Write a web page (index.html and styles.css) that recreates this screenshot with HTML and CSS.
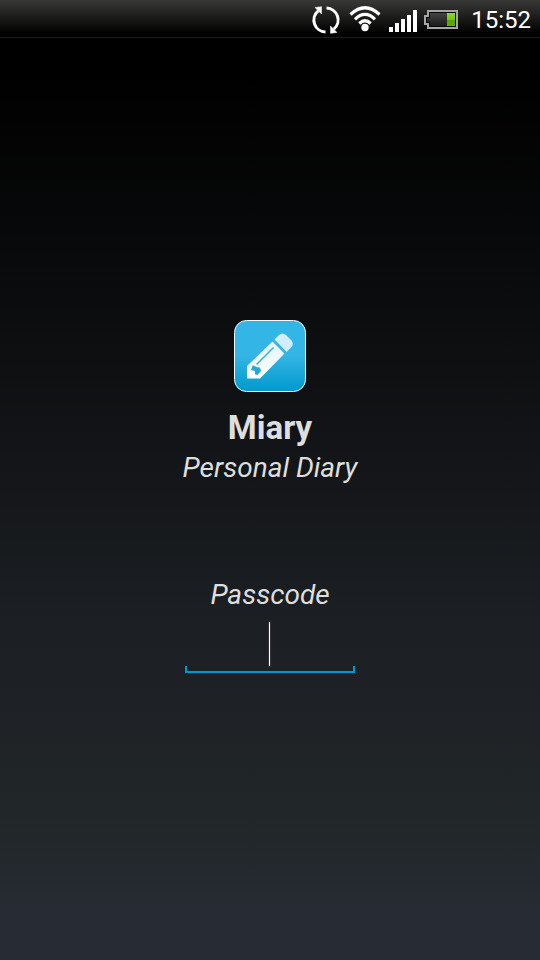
FILE: index.html
```html
<!DOCTYPE html>
<html lang="en">
<head>
<meta charset="utf-8">
<meta name="viewport" content="width=device-width, initial-scale=1">
<title>Miary</title>
<link rel="stylesheet" href="styles.css">
</head>
<body>
<header class="status">
  <svg class="sync" width="30" height="30" viewBox="0 0 30 30" aria-hidden="true">
    <g fill="none" stroke="#fff" stroke-width="3">
      <path d="M15.500 3A12 12 0 0 1 22.800 24.200"/>
      <path d="M14.500 27A12 12 0 0 1 7.200 5.800"/>
    </g>
    <path d="M19.500 21V28.300L26 27.500ZM10.500 9V1.700L4 2.500Z" fill="#fff" stroke="#fff" stroke-width=".5"/>
  </svg>
  <svg class="wifi" width="32" height="28" viewBox="0 0 32 28" aria-hidden="true">
    <g fill="none" stroke="#fff" stroke-width="3.200">
      <path d="M1.500 8.500Q16-5 30.500 8.500"/>
      <path d="M6 13.300Q16 3.500 26 13.300"/>
      <path d="M10.300 17.500Q16 12 21.700 17.500"/>
    </g>
    <circle cx="16" cy="21.500" r="3.700" fill="#fff"/>
  </svg>
  <svg class="signal" width="28" height="22" viewBox="0 0 28 22" aria-hidden="true">
    <path fill="#fff" d="M0 17h4v5H0zM6 13h4v9H6zM12 9h4v13h-4zM18 5h4v17h-4zM24 0h4v22h-4z"/>
  </svg>
  <svg class="battery" width="34" height="19" viewBox="0 0 34 19" aria-hidden="true">
    <defs>
      <linearGradient id="cell" x2="0" y2="1"><stop offset="0" stop-color="#444"/><stop offset="1" stop-color="#1b1b1b"/></linearGradient>
      <linearGradient id="charge" x2="0" y2="1"><stop offset="0" stop-color="#8fd82b"/><stop offset=".5" stop-color="#79c411"/><stop offset=".55" stop-color="#5ba500"/><stop offset="1" stop-color="#60a80a"/></linearGradient>
    </defs>
    <path d="M4 1H33V18H4V14H1V6H4Z" fill="#080808" stroke="#a6a6a6" stroke-width="2"/>
    <path d="M6 3H23V16H6V12H3V8H6Z" fill="url(#cell)"/>
    <path d="M23 3h8v13h-8z" fill="url(#charge)"/>
  </svg>
  <time class="clock">15:52</time>
</header>
<main class="login">
  <svg class="logo" width="72" height="72" viewBox="0 0 72 72" aria-hidden="true">
    <defs>
      <linearGradient id="tile" x2="0" y2="1"><stop offset="0" stop-color="#33b5e5"/><stop offset=".5" stop-color="#33b5e5"/><stop offset="1" stop-color="#0099cc"/></linearGradient>
      <linearGradient id="pencil" x2="0" y2="1"><stop offset="0" stop-color="#dff4fb"/><stop offset="1" stop-color="#fff"/></linearGradient>
    </defs>
    <rect x=".5" y=".5" width="71" height="71" rx="12" fill="url(#tile)" stroke="#f2fafd"/>
    <path fill="#cfeef9" d="M40.500 19.500L45 15Q48.500 12 52 15L57.500 20.500Q60 24 57.500 27L52.700 32Z"/>
    <path fill="url(#pencil)" fill-rule="evenodd" d="M38.500 21.500L50.500 33.500L26 58.500H13V46ZM18.700 45.300L17 50L21 51V54.300L23.300 55L27 51L26 47.700L22 46.700Z"/>
    <path d="M22.500 44.500L39.500 27.500" fill="none" stroke="#32b0df" stroke-width="1.500"/>
  </svg>
  <h1 class="name">Miary</h1>
  <p class="tagline">Personal Diary</p>
  <label class="label" for="passcode">Passcode</label>
  <div class="field">
    <input class="input" id="passcode" type="password" inputmode="numeric" autocomplete="off">
    <span class="caret"></span>
  </div>
</main>
</body>
</html>
```
FILE: styles.css
```css
* {
  box-sizing: border-box;
}

body {
  display: flex;
  flex-direction: column;
  min-height: 100vh;
  margin: 0;
  background: linear-gradient(#000 8%, #0e1012 39%, #1b1e22 63%, #22272a 87%, #272b33 95%, #272b33);
  color: #dedede;
  font-family: Roboto, "Noto Sans", sans-serif;
}

.status {
  display: flex;
  align-items: center;
  justify-content: flex-end;
  height: 38px;
  padding: 2px 9px 0 0;
  border-bottom: 1px solid #1c1e1d;
  background: linear-gradient(#383836, #000 92%);
  color: #fff;
}

.wifi {
  margin: 0 8px 0 8px;
}

.signal {
  margin-top: 2px;
}

.battery {
  margin: 0 13px 0 7px;
}

.clock {
  font-size: 24px;
  line-height: 36px;
}

.login {
  display: flex;
  flex: 1;
  flex-direction: column;
  align-items: center;
  justify-content: center;
  padding-bottom: 5px;
}

.name {
  margin: 16px 0 0;
  font-size: 33px;
  font-weight: 700;
  line-height: 40px;
}

.tagline {
  margin: 4px 0 0;
  font-size: 28px;
  font-style: italic;
  line-height: 32px;
}

.label {
  margin-top: 95px;
  font-size: 28px;
  font-style: italic;
  line-height: 32px;
}

.field {
  position: relative;
  width: 170px;
  margin-top: 6px;
  padding: 0 2px 2px;
  background:
    linear-gradient(#0099cc, #0099cc) left bottom / 2px 7px no-repeat,
    linear-gradient(#0099cc, #0099cc) right bottom / 2px 7px no-repeat,
    linear-gradient(#0099cc, #0099cc) left bottom / 100% 2px no-repeat;
}

.input {
  display: block;
  width: 100%;
  height: 54px;
  padding: 0;
  border: 0;
  outline: 0;
  background: transparent;
  color: #fff;
  font: inherit;
  font-size: 34px;
  text-align: center;
}

.caret {
  position: absolute;
  top: 5px;
  left: 50%;
  width: 1px;
  height: 44px;
  margin-left: -1px;
  background: #fff;
  box-shadow: 0 0 1px 1px #33353a;
}

.input:focus + .caret {
  visibility: hidden;
}
```
